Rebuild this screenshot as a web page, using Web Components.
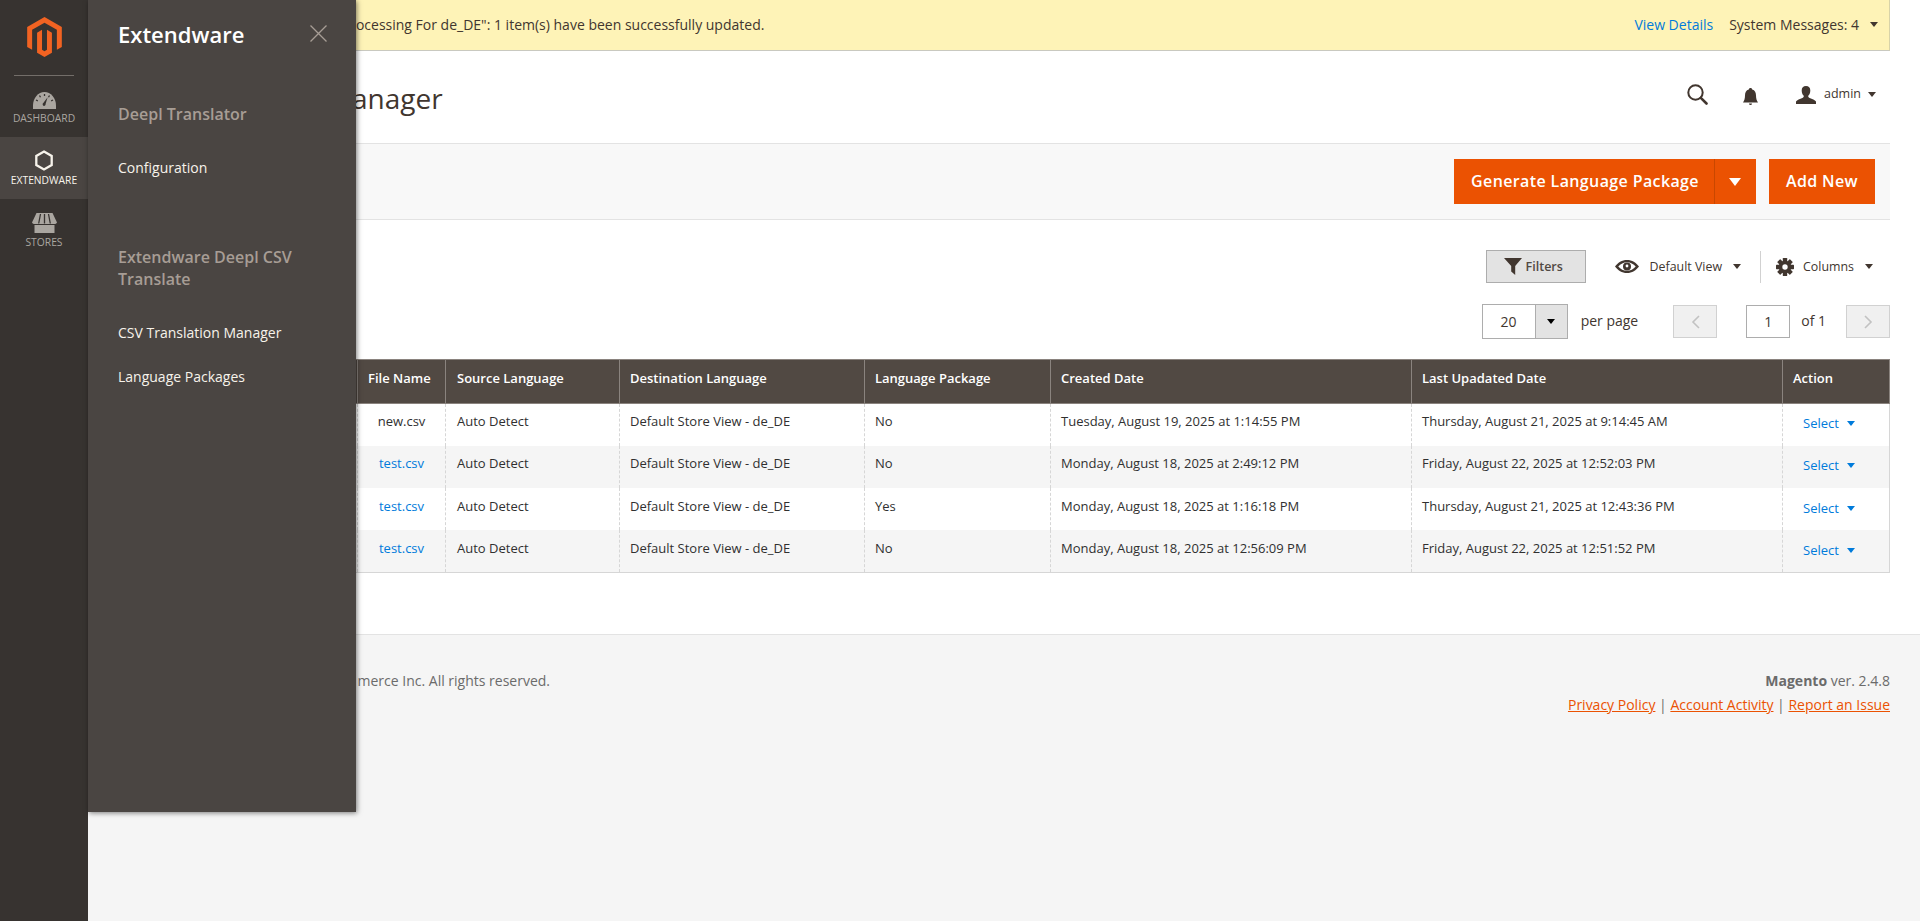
<!DOCTYPE html>
<html lang="en">
<head>
<meta charset="utf-8">
<title>CSV Translation Manager</title>
<style>
html,body{margin:0;padding:0;height:100%;background:#fff}
body{font-family:"Open Sans",sans-serif;font-size:14px;color:#41362f;overflow:hidden}
#app{display:flex;width:1920px;height:921px;overflow:hidden}
#main{flex:1;display:flex;flex-direction:column;min-width:0}
#content{padding-right:30px;background:#fff;height:634px;box-sizing:border-box}
</style>
</head>
<body>
<div id="app">
  <admin-nav>
    <nav-item label="Dashboard" slot="items">
      <svg slot="icon" width="23" height="17" viewBox="0 0 23 17"><path fill="#aaa6a0" d="M0 17V13.500C0 6 5.200 0 11.500 0S23 6 23 13.500V17z"/><path fill="none" stroke="#373330" stroke-width="1.300" d="M11.500 2v2M6.500 3.500l1 1.800M16.500 3.500l-1 1.800M3 8l1.800.9M20 8l-1.800.9"/><path fill="#373330" d="M14.600 5.200l-2 6.800a1.500 1.500 0 1 1-2.300-.9z"/></svg>
    </nav-item>
    <nav-item label="Extendware" active slot="items">
      <svg slot="icon" width="20" height="21" viewBox="0 0 20 21"><path fill="none" stroke="#f7f3eb" stroke-width="2.300" d="M10 1.500l7.700 4.400v9.200L10 19.500l-7.700-4.400V5.900z"/></svg>
    </nav-item>
    <nav-item label="Stores" slot="items">
      <svg slot="icon" width="25" height="20" viewBox="0 0 25 20"><path fill="#aaa6a0" d="M4.500 0h16L25 9.500c-.6 1-1.600 1.500-2.800 1.500H2.800C1.600 11 .6 10.500 0 9.500z"/><path fill="none" stroke="#373330" stroke-width="1.300" d="M8.500 1L6.700 10.500M12.500 1v9.500M16.500 1l1.800 9.500"/><path fill="#aaa6a0" d="M2.500 12h20v8h-20z"/></svg>
    </nav-item>
    <slide-panel slot="panel"></slide-panel>
  </admin-nav>
  <div id="main">
    <div id="content">
      <sys-message></sys-message>
      <page-header></page-header>
      <page-actions></page-actions>
      <grid-controls></grid-controls>
      <data-grid></data-grid>
    </div>
    <page-footer></page-footer>
  </div>
</div>
<script>
function def(name,html,init){
  customElements.define(name,class extends HTMLElement{
    constructor(){super();this.attachShadow({mode:'open'}).innerHTML=html;}
    connectedCallback(){if(init&&!this._i){this._i=1;init(this);}}
  });
}
const caret=(c,w=4,h=5)=>`<span style="display:inline-block;width:0;height:0;border-left:${w}px solid transparent;border-right:${w}px solid transparent;border-top:${h}px solid ${c}"></span>`;
const under=t=>`<span style="visibility:hidden">${t}</span>`;

def('admin-nav',`<style>
:host{display:block;position:relative;width:88px;flex:none;height:921px;background:#373330;z-index:5}
.logo{display:block;margin:17px auto 0;width:35px;height:40px}
hr{border:0;border-top:1px solid #736e69;margin:18px 14px 0;height:0}
</style>
<svg class="logo" viewBox="1.609 0 20.782 24"><path fill="#f26322" d="M12 24l-4.455-2.572v-12l2.970-1.715v12.001l1.485.902 1.485-.902V7.713l2.970 1.715v12L12 24zM22.391 6v12l-2.969 1.714V7.713L12 3.430 4.574 7.713v12L1.609 18V6L12 0l10.391 6z"/></svg>
<hr>
<slot name="items"></slot>
<slot name="panel"></slot>`);

def('nav-item',`<style>
:host{display:flex;flex-direction:column;align-items:center;box-sizing:border-box;height:61px;padding-top:16px;color:#aaa6a0}
:host([active]){background:#4a4542;color:#f7f3eb;height:62px;padding-top:13px}
:host(:last-of-type){padding-top:14px}
.l{font-size:10.300px;line-height:14px;margin-top:2px;text-transform:uppercase;white-space:nowrap}
::slotted(svg){display:block}
</style><slot name="icon"></slot><span class="l"></span>`,el=>{el.shadowRoot.querySelector('.l').textContent=el.getAttribute('label');});

def('slide-panel',`<style>
:host{display:block;position:absolute;left:88px;top:0;width:268px;height:812px;box-sizing:border-box;background:#4a4542;padding:19px 20px 0 30px;box-shadow:1px 1px 5px rgba(0,0,0,.5);z-index:10}
h2{margin:0;font-size:22px;line-height:30px;font-weight:600;color:#fff}
.x{position:absolute;left:222px;top:25px;width:17px;height:17px}
h3{margin:0;font-size:16px;line-height:22px;font-weight:600;color:#a79d95}
a{display:block;color:#f7f3eb;font-size:14px;line-height:20px}
.a{margin-top:54px}.b{margin-top:33px}.c{margin-top:68px}.d{margin-top:33px}.e{margin-top:24px}
</style>
<h2>Extendware</h2>
<svg class="x" viewBox="0 0 17 17"><path stroke="#a79d95" stroke-width="1.300" d="M.5.5l16 16M16.500.5l-16 16"/></svg>
<h3 class="a">Deepl Translator</h3>
<a class="b">Configuration</a>
<h3 class="c">Extendware Deepl CSV Translate</h3>
<a class="d">CSV Translation Manager</a>
<a class="e">Language Packages</a>`);

def('sys-message',`<style>
:host{display:flex;align-items:center;height:51px;box-sizing:border-box;background:#fef3b7;border-bottom:1px solid #c9c9c0;border-right:1px solid #d8d3a8;font-size:14px;color:#41362f;padding:0 11px 2px 0}
.m{flex:1;padding-left:215px;white-space:nowrap}
a{color:#007bdb;margin-right:16px}
.c{margin-left:11px;line-height:0}
</style>
<span class="m">${under('Task "Pr')}ocessing For de_DE": 1 item(s) have been successfully updated.</span>
<a>View Details</a><span>System Messages: 4</span><span class="c">${caret('#41362f')}</span>`);

def('page-header',`<style>
:host{display:flex;align-items:center;height:92px;box-sizing:border-box;padding:0 14px 0 28px}
h1{flex:1;margin:0;font-size:28px;font-weight:400;line-height:36px;color:#41362f;white-space:nowrap;position:relative;top:1px}
.s{margin-right:35.500px;position:relative;top:-3px}
.b{margin-right:38px}
.u{margin-right:8px;position:relative;top:-2px}
.t{font-size:12.500px;color:#41362f;margin-right:7px;position:relative;top:-4px}
.c{position:relative;top:-3px;line-height:0}
svg{display:block}
</style>
<h1>${under('CSV Translation M')}anager</h1>
<svg class="s" width="21" height="21" viewBox="0 0 21 21"><circle cx="8.500" cy="8.500" r="7.200" fill="none" stroke="#41362f" stroke-width="2"/><path stroke="#41362f" stroke-width="2.600" stroke-linecap="round" d="M13.800 13.800l5.700 5.700"/></svg>
<svg class="b" width="15" height="18" viewBox="0 0 15 18"><path fill="#41362f" d="M7.500 0c1 0 1.600.6 1.700 1.500C12 2.300 13 4.500 13 7.500c0 3 .7 5 2 7H0c1.300-2 2-4 2-7 0-3 1-5.200 3.800-6C5.900.6 6.500 0 7.500 0zM6 15.500h3a1.500 1.500 0 0 1-3 0z"/></svg>
<svg class="u" width="20" height="18" viewBox="0 0 20 18"><path fill="#41362f" d="M10 0c2.800 0 4.300 1.800 4.300 4.400 0 2.300-.9 4.300-2.100 5.400 0 1 .2 1.600 1.400 2.200 2.500 1.100 5.400 1.900 6.400 3.500V18H0v-2.500c1-1.600 3.900-2.400 6.400-3.500 1.200-.6 1.400-1.200 1.400-2.200C6.600 8.700 5.700 6.700 5.700 4.400 5.700 1.800 7.200 0 10 0z"/></svg>
<span class="t">admin</span><span class="c">${caret('#41362f')}</span>`);

def('page-actions',`<style>
:host{display:flex;justify-content:flex-end;align-items:center;height:77px;box-sizing:border-box;background:#f8f8f8;border-top:1px solid #e3e3e3;border-bottom:1px solid #e3e3e3;padding-right:15px;gap:13px}
.g{display:flex;background:#eb5202;height:45px;color:#fff;font-size:16px;font-weight:600;letter-spacing:.38px;align-items:center}
.l{padding:0 15px 2px 17px;width:260px;box-sizing:border-box;text-align:center;white-space:nowrap}
.d{width:42px;height:45px;border-left:1px solid #c94700;display:flex;align-items:center;justify-content:center;box-sizing:border-box;padding-right:2px}
.n{width:106px;text-align:center;white-space:nowrap;padding-bottom:2px}
</style>
<div class="g"><span class="l">Generate Language Package</span><span class="d">${caret('#fff',6,8)}</span></div>
<div class="g"><span class="n">Add New</span></div>`);

def('grid-controls',`<style>
:host{display:block;box-sizing:border-box;height:139px;padding-top:30px;font-size:12.400px;color:#41362f}
.r{display:flex;justify-content:flex-end;align-items:center}
.r1{height:33px;padding-right:17px}
.r2{height:35px;margin-top:21px}
.f{width:100px;height:33px;box-sizing:border-box;background:#e3e3e3;border:1px solid #adadad;display:flex;align-items:center;padding-left:17px;gap:4px;font-weight:600;font-size:12.500px;color:#514943;margin-right:29px}
.dv{width:1px;height:32px;background:#d1d1d1;margin:0 15px 0 19px}
.sel{display:flex;width:86px;height:35px;box-sizing:border-box;border:1px solid #adadad;background:#fff;margin-right:13px}
.sel b{flex:1;font-weight:400;font-size:14px;text-align:center;line-height:33px}
.sel i{width:32px;background:#e3e3e3;border-left:1px solid #adadad;display:flex;align-items:center;justify-content:center;box-sizing:border-box}
.pp{font-size:14px;margin-right:35px;color:#41362f;padding-bottom:2px}
.pb{width:44px;height:33px;box-sizing:border-box;background:#f0f0f0;border:1px solid #d1d1d1;display:flex;align-items:center;justify-content:center}
.in{width:44px;height:33px;box-sizing:border-box;border:1px solid #adadad;background:#fff;text-align:center;line-height:31px;font-size:14px;margin:0 11px 0 29px}
.of{font-size:14px;margin-right:20px;padding-bottom:2px}
.ml{margin-left:11px;line-height:0}
.tx{margin-left:11px}
</style>
<div class="r r1">
 <div class="f"><svg width="18" height="17" viewBox="0 0 18 17"><path fill="#41362f" d="M0 0h18l-6.800 8v9l-4-3.500V8z"/></svg><span>Filters</span></div>
 <svg width="24" height="13" viewBox="0 0 24 13"><path fill="#41362f" fill-rule="evenodd" d="M12 0c5 0 9.300 2.700 12 6.500C21.300 10.300 17 13 12 13S2.700 10.300 0 6.500C2.700 2.700 7 0 12 0zm0 2.200c-3.400 0-6.500 1.600-8.700 4.300 2.200 2.700 5.300 4.300 8.700 4.300s6.500-1.600 8.700-4.300C18.500 3.800 15.400 2.200 12 2.200z"/><circle cx="12" cy="6.500" r="4" fill="#41362f"/><circle cx="12" cy="6" r="1.400" fill="#fff"/></svg>
 <span class="tx">Default View</span><span class="ml">${caret('#41362f')}</span>
 <span class="dv"></span>
 <svg width="18" height="18" viewBox="0 0 18 18"><g fill="#41362f"><rect x="6.800" y="0" width="4.400" height="18" rx=".6"/><rect x="6.800" y="0" width="4.400" height="18" rx=".6" transform="rotate(45 9 9)"/><rect x="6.800" y="0" width="4.400" height="18" rx=".6" transform="rotate(90 9 9)"/><rect x="6.800" y="0" width="4.400" height="18" rx=".6" transform="rotate(135 9 9)"/><circle cx="9" cy="9" r="6.300"/></g><circle cx="9" cy="9" r="2.700" fill="#fff"/></svg>
 <span class="tx" style="margin-left:9px">Columns</span><span class="ml">${caret('#41362f')}</span>
</div>
<div class="r r2">
 <div class="sel"><b>20</b><i>${caret('#000')}</i></div>
 <span class="pp">per page</span>
 <div class="pb"><svg width="9" height="14" viewBox="0 0 9 14"><path fill="none" stroke="#c2c2c2" stroke-width="1.600" d="M8 1L2 7l6 6"/></svg></div>
 <div class="in">1</div>
 <span class="of">of 1</span>
 <div class="pb"><svg width="9" height="14" viewBox="0 0 9 14"><path fill="none" stroke="#c2c2c2" stroke-width="1.600" d="M1 1l6 6-6 6"/></svg></div>
</div>`);

const rows=[
 ['new.csv',0,'No','Tuesday, August 19, 2025 at 1:14:55 PM','Thursday, August 21, 2025 at 9:14:45 AM'],
 ['test.csv',1,'No','Monday, August 18, 2025 at 2:49:12 PM','Friday, August 22, 2025 at 12:52:03 PM'],
 ['test.csv',1,'Yes','Monday, August 18, 2025 at 1:16:18 PM','Thursday, August 21, 2025 at 12:43:36 PM'],
 ['test.csv',1,'No','Monday, August 18, 2025 at 12:56:09 PM','Friday, August 22, 2025 at 12:51:52 PM']];
def('data-grid',`<style>
:host{display:block;margin-left:30px;font-size:13px;color:#303030}
table{border-collapse:collapse;table-layout:fixed;width:1771px}
th{background:#514943;color:#fff;font-weight:600;text-align:left;height:44px;padding:0 10px 7px;box-sizing:border-box;border:1px solid #8a837e;white-space:nowrap}
td{height:42.250px;box-sizing:border-box;padding:0 10px 7px;border-left:1px dashed #d6d6d6;border-right:1px dashed #d6d6d6;white-space:nowrap}
th:nth-child(3),td:nth-child(3){padding-left:11px}
tbody tr:nth-child(even) td{background:#f5f5f5}
tbody tr:last-child td{border-bottom:1px solid #d6d6d6}
td:last-child{border-right:1px solid #d6d6d6}
.fn{text-align:center}
a{color:#007bdb}
td.s{padding-left:20px;color:#007bdb}
.s span{margin-left:4px;position:relative;top:-1px}
.s div{position:relative;top:2px}
</style>
<table><colgroup><col style="width:239px"><col style="width:88px"><col style="width:174px"><col style="width:245px"><col style="width:186px"><col style="width:361px"><col style="width:371px"><col style="width:107px"></colgroup>
<thead><tr><th></th><th>File Name</th><th>Source Language</th><th>Destination Language</th><th>Language Package</th><th>Created Date</th><th>Last Upadated Date</th><th>Action</th></tr></thead>
<tbody></tbody></table>`,el=>{
  el.shadowRoot.querySelector('tbody').innerHTML=rows.map(r=>`<tr><td></td><td class="fn">${r[1]?`<a>${r[0]}</a>`:r[0]}</td><td>Auto Detect</td><td>Default Store View - de_DE</td><td>${r[2]}</td><td>${r[3]}</td><td>${r[4]}</td><td class="s"><div>Select<span>${caret('#007bdb',4,5)}</span></div></td></tr>`).join('');
});

def('page-footer',`<style>
:host{display:flex;justify-content:space-between;flex:1;box-sizing:border-box;background:#f5f5f5;border-top:1px solid #e3e3e3;padding:36px 30px 0;font-size:14px;color:#6b6b6b}
.c{line-height:20px;padding-left:30px;white-space:nowrap}
.r{text-align:right;line-height:20px}
.l{margin-top:4px}
a{color:#eb5202;text-decoration:underline}
</style>
<div class="c">${under('Copyright © 2025 Magento Com')}merce Inc. All rights reserved.</div>
<div class="r"><div><b>Magento</b> ver. 2.4.8</div><div class="l"><a>Privacy Policy</a> | <a>Account Activity</a> | <a>Report an Issue</a></div></div>`);
</script>
</body>
</html>
